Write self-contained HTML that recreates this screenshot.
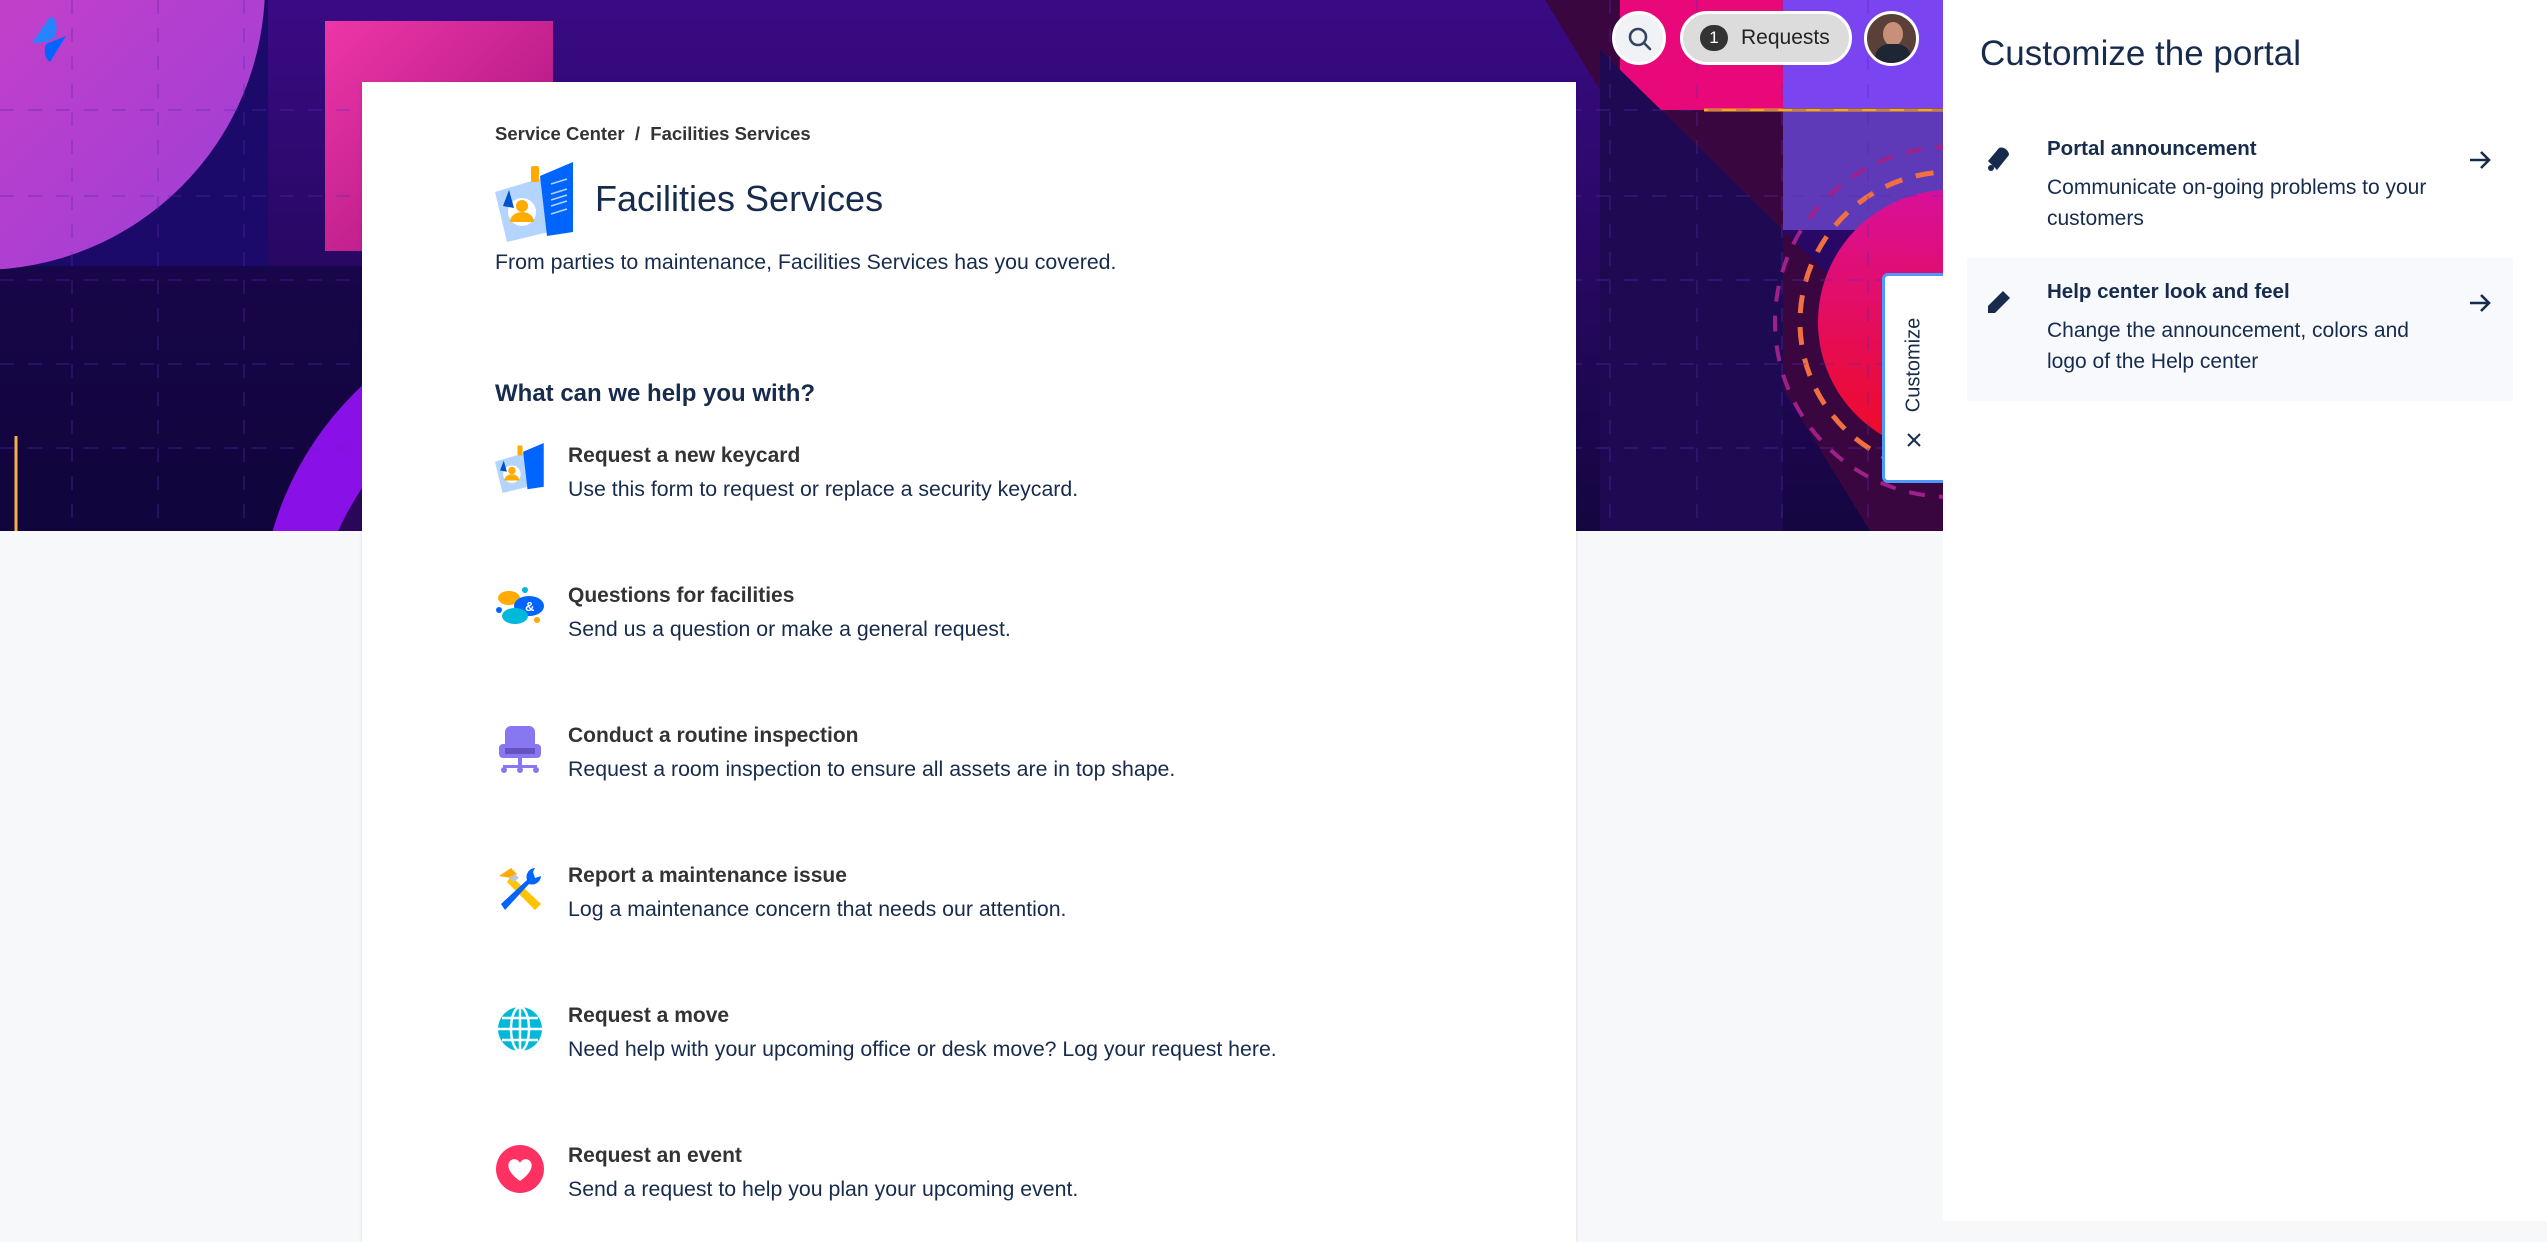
<!DOCTYPE html>
<html><head><meta charset="utf-8"><style>
*{margin:0;padding:0;box-sizing:border-box}
body{width:2547px;height:1221px;overflow:hidden;background:#f7f8fa;font-family:"Liberation Sans",Arial,sans-serif;position:relative;color:#172b4d}
.abs{position:absolute}
.card{position:absolute;left:362px;top:82px;width:1214px;height:1160px;background:#fff;box-shadow:0 1px 3px rgba(9,30,66,.15)}
.bc{position:absolute;left:133px;top:41px;font-size:18.5px;font-weight:bold;color:#333}
.item{position:absolute;left:133px;height:60px}
.item .t{position:absolute;left:73px;top:0;font-size:21px;font-weight:bold;color:#333;white-space:nowrap}
.item .d{position:absolute;left:73px;top:33px;font-size:21.3px;color:#172b4d;white-space:nowrap}
.item svg{position:absolute;left:0;top:0}
.panel{position:absolute;left:1943px;top:0;width:604px;height:1221px;background:#fff}
.pi{position:absolute;left:24px;width:546px;height:143px}
.pi .t{position:absolute;left:80px;top:22px;font-size:20.5px;font-weight:bold}
.pi .d{position:absolute;left:80px;top:57px;font-size:21px;line-height:31px;width:405px}
</style></head><body>
<svg class="abs" style="left:0;top:0" width="1943" height="531" viewBox="0 0 1943 531">
<defs>
<linearGradient id="pk" x1="0" y1="0" x2="1" y2="1"><stop offset="0" stop-color="#f040b8"/><stop offset="1" stop-color="#9a3fd8"/></linearGradient>
<linearGradient id="pr" x1="0" y1="0" x2="1" y2="1"><stop offset="0" stop-color="#ee36a8"/><stop offset="1" stop-color="#a0107a"/></linearGradient>
<linearGradient id="vi" x1="0" y1="0" x2="0" y2="1"><stop offset="0" stop-color="#9b3cf0"/><stop offset="1" stop-color="#7a3cf0"/></linearGradient>
<linearGradient id="rd" x1="0" y1="0" x2="0" y2="1"><stop offset="0" stop-color="#d8109a"/><stop offset="1" stop-color="#f00a20"/></linearGradient>
<linearGradient id="bg" x1="0" y1="0" x2="0" y2="1"><stop offset="0" stop-color="#3a0a84"/><stop offset="1" stop-color="#140640"/></linearGradient>
</defs>
<rect width="1943" height="531" fill="url(#bg)"/>
<rect x="0" y="266" width="362" height="265" fill="#0e0538" opacity=".6"/>
<rect x="0" y="0" width="268" height="266" fill="#1c0a6a"/>
<circle cx="-20" cy="-15" r="285" fill="url(#pk)"/>
<rect x="325" y="21" width="228" height="230" fill="url(#pr)"/>
<circle cx="580" cy="620" r="320" fill="#8a10e8"/>
<circle cx="620" cy="660" r="310" fill="#1a0640" opacity=".85"/>
<circle cx="660" cy="720" r="310" fill="url(#vi)"/>
<polygon points="1545,0 1783,0 1783,230 1943,390 1943,531 1870,531" fill="#3a0640"/>
<rect x="1620" y="0" width="163" height="110" fill="#e8087a"/>
<polygon points="1545,0 1620,0 1620,60" fill="#3a0640"/>
<rect x="1783" y="0" width="160" height="108" fill="#7a44f0"/>
<rect x="1783" y="110" width="160" height="120" fill="#5e3ab8"/>
<polygon points="1600,50 1783,230 1783,531 1600,531" fill="#1e0a52"/>
<line x1="1704" y1="110" x2="1943" y2="110" stroke="#f5a623" stroke-width="3"/>
<circle cx="1950" cy="322" r="175" fill="none" stroke="#a0208a" stroke-width="4" stroke-dasharray="16 14"/>
<circle cx="1950" cy="322" r="150" fill="none" stroke="#f07040" stroke-width="5" stroke-dasharray="18 14"/>
<circle cx="1950" cy="322" r="132" fill="url(#rd)"/>
<g stroke="#5a2ab0" stroke-width="2" stroke-dasharray="14 14" opacity=".3">
<line x1="0" y1="110" x2="1943" y2="110"/><line x1="0" y1="196" x2="1943" y2="196"/><line x1="0" y1="280" x2="1943" y2="280"/><line x1="0" y1="364" x2="1943" y2="364"/><line x1="0" y1="448" x2="1943" y2="448"/>
<line x1="72" y1="0" x2="72" y2="531"/><line x1="158" y1="0" x2="158" y2="531"/><line x1="244" y1="0" x2="244" y2="531"/><line x1="1610" y1="0" x2="1610" y2="531"/><line x1="1697" y1="0" x2="1697" y2="531"/><line x1="1782" y1="0" x2="1782" y2="531"/><line x1="1868" y1="0" x2="1868" y2="531"/>
</g>
<line x1="16" y1="436" x2="16" y2="531" stroke="#f5b04a" stroke-width="3"/>
<path d="M50 17 C58 18 58 30 54 38 L46 42 L32 43 Z" fill="#2684ff"/>
<path d="M66 36 L50 62 C44 58 44 50 46 44 Z" fill="#0065ff"/>
</svg>
<div class="abs" style="left:1612px;top:11px;width:54px;height:54px;border-radius:50%;background:#f1f2f6;border:3px solid #fff"></div>
<svg class="abs" style="left:1626px;top:25px" width="28" height="28" viewBox="0 0 28 28"><circle cx="12" cy="12" r="8" fill="none" stroke="#344563" stroke-width="2.6"/><line x1="18" y1="18" x2="24" y2="24" stroke="#344563" stroke-width="2.6" stroke-linecap="round"/></svg>
<div class="abs" style="left:1680px;top:11px;width:172px;height:54px;border-radius:27px;background:#dcdcdc;border:3px solid #fff"></div>
<div class="abs" style="left:1700px;top:25px;width:28px;height:26px;border-radius:13px;background:#333;color:#fff;font-size:17px;text-align:center;line-height:26px">1</div>
<div class="abs" style="left:1741px;top:26px;font-size:21px;color:#222">Requests</div>
<div class="abs" style="left:1864px;top:11px;width:55px;height:55px;border-radius:50%;background:#5a4038;border:3px solid #fff;overflow:hidden"><div style="position:absolute;left:16px;top:8px;width:20px;height:24px;border-radius:50%;background:#c89078"></div><div style="position:absolute;left:8px;top:30px;width:36px;height:30px;border-radius:14px 14px 0 0;background:#1e2636"></div></div>

<div class="card">
<div class="bc">Service Center &nbsp;/&nbsp; Facilities Services</div>
<svg class="abs" style="left:133px;top:80px" width="80" height="80" viewBox="0 0 80 80"><polygon points="0,30 60,12 62,68 12,80" fill="#b3d4ff"/><polygon points="45,14 78,0 78,70 52,74" fill="#0065ff"/><circle cx="27" cy="50" r="14" fill="#fff"/><circle cx="27" cy="44" r="6" fill="#ffab00"/><path d="M15 60 a12 10 0 0 1 24 0 z" fill="#ffab00"/><polygon points="8,44 14,28 19,46" fill="#0052cc"/><rect x="36" y="4" width="8" height="16" rx="2" fill="#ffab00"/><g stroke="#b3d4ff" stroke-width="1.5"><line x1="56" y1="22" x2="72" y2="17"/><line x1="56" y1="32" x2="72" y2="27"/><line x1="56" y1="38" x2="72" y2="33"/><line x1="56" y1="44" x2="72" y2="39"/><line x1="56" y1="52" x2="72" y2="47"/></g></svg>
<div class="abs" style="left:233px;top:96px;font-size:36px;color:#172b4d">Facilities Services</div>
<div class="abs" style="left:133px;top:168px;font-size:21.3px">From parties to maintenance, Facilities Services has you covered.</div>
<div class="abs" style="left:133px;top:298px;font-size:24px;font-weight:bold">What can we help you with?</div>

<div class="item" style="top:362px"><svg width="50" height="52" viewBox="0 0 80 80" style="top:-2px"><polygon points="0,30 60,12 62,68 12,80" fill="#b3d4ff"/><polygon points="45,14 78,0 78,70 52,74" fill="#0065ff"/><circle cx="27" cy="50" r="14" fill="#fff"/><circle cx="27" cy="44" r="6" fill="#ffab00"/><path d="M15 60 a12 10 0 0 1 24 0 z" fill="#ffab00"/><polygon points="8,44 14,28 19,46" fill="#0052cc"/><rect x="36" y="4" width="8" height="16" rx="2" fill="#ffab00"/></svg><div class="t">Request a new keycard</div><div class="d">Use this form to request or replace a security keycard.</div></div>

<div class="item" style="top:502px"><svg width="52" height="50" viewBox="0 0 52 50"><ellipse cx="14" cy="14" rx="11" ry="7" fill="#ffab00"/><ellipse cx="34" cy="22" rx="15" ry="10" fill="#0065ff"/><ellipse cx="20" cy="32" rx="13" ry="8" fill="#00b8d9"/><circle cx="30" cy="6" r="3" fill="#00b8d9"/><circle cx="4" cy="26" r="3" fill="#0065ff"/><circle cx="42" cy="36" r="3" fill="#ffab00"/><text x="30" y="27" font-size="13" font-weight="bold" fill="#fff" font-family="Liberation Sans">&amp;</text></svg><div class="t">Questions for facilities</div><div class="d">Send us a question or make a general request.</div></div>

<div class="item" style="top:642px"><svg width="50" height="50" viewBox="0 0 50 50"><rect x="10" y="2" width="30" height="26" rx="6" fill="#8777f0"/><rect x="4" y="20" width="42" height="14" rx="4" fill="#8777f0"/><rect x="10" y="24" width="30" height="6" fill="#6554c0"/><rect x="23" y="34" width="4" height="8" fill="#8777f0"/><rect x="8" y="41" width="34" height="3" fill="#8777f0"/><circle cx="9" cy="46" r="3" fill="#8777f0"/><circle cx="25" cy="46" r="3" fill="#8777f0"/><circle cx="41" cy="46" r="3" fill="#8777f0"/></svg><div class="t">Conduct a routine inspection</div><div class="d">Request a room inspection to ensure all assets are in top shape.</div></div>

<div class="item" style="top:782px"><svg width="50" height="50" viewBox="0 0 50 50"><path d="M4 12 L16 4 L22 10 L16 14 Z" fill="#ffab00"/><path d="M16 12 L46 40 L40 46 L12 18 Z" fill="#ffc400"/><path d="M14 14 L20 10 L24 14 L18 18Z" fill="#c1c7d0"/><path d="M40 4 a9 9 0 0 0 -8 12 L6 40 L10 46 L34 20 a9 9 0 0 0 12 -8 L40 14 L38 8 Z" fill="#0065ff"/></svg><div class="t">Report a maintenance issue</div><div class="d">Log a maintenance concern that needs our attention.</div></div>

<div class="item" style="top:922px"><svg width="50" height="50" viewBox="0 0 50 50"><circle cx="25" cy="25" r="22" fill="#00b8d9"/><g fill="none" stroke="#fff" stroke-width="2.5"><ellipse cx="25" cy="25" rx="9" ry="22"/><line x1="25" y1="3" x2="25" y2="47"/><line x1="3" y1="25" x2="47" y2="25"/><path d="M7 14 H43 M7 36 H43"/></g></svg><div class="t">Request a move</div><div class="d">Need help with your upcoming office or desk move? Log your request here.</div></div>

<div class="item" style="top:1062px"><svg width="50" height="50" viewBox="0 0 50 50"><circle cx="25" cy="25" r="24" fill="#ff3162"/><path d="M25 37 C12 28 12 20 15 17 C19 13 24 16 25 19 C26 16 31 13 35 17 C38 20 38 28 25 37Z" fill="#fff"/></svg><div class="t">Request an event</div><div class="d">Send a request to help you plan your upcoming event.</div></div>
</div>

<div class="abs" style="left:1882px;top:273px;width:66px;height:210px;background:#fff;border:3px solid #4c9aff;border-right:none;border-radius:6px 0 0 6px"></div>
<div class="abs" style="left:1914px;top:365px;transform:translate(-50%,-50%) rotate(-90deg);font-size:20px;color:#172b4d;white-space:nowrap">Customize</div>
<svg class="abs" style="left:1906px;top:432px" width="16" height="16" viewBox="0 0 16 16"><path d="M2 2L14 14M14 2L2 14" stroke="#172b4d" stroke-width="2"/></svg>

<div class="panel">
<div class="abs" style="left:37px;top:34px;font-size:35px;color:#172b4d">Customize the portal</div>
<div class="pi" style="top:115px">
<svg class="abs" style="left:18px;top:30px" width="28" height="28" viewBox="0 0 28 28"><path d="M3 16 L14 3 C18 1 24 5 24 10 L12 25 Z" fill="#172b4d"/><circle cx="6" cy="23" r="3" fill="#172b4d"/></svg>
<div class="t">Portal announcement</div><div class="d">Communicate on-going problems to your customers</div>
<svg class="abs" style="left:500px;top:32px" width="26" height="26" viewBox="0 0 26 26"><path d="M3 13H22M14 5L22 13L14 21" fill="none" stroke="#172b4d" stroke-width="2.6"/></svg>
</div>
<div class="pi" style="top:258px;background:#f7f9fc">
<svg class="abs" style="left:18px;top:30px" width="28" height="28" viewBox="0 0 28 28"><path d="M18 3 L25 10 L10 25 L3 25 L3 18 Z" fill="#172b4d"/></svg>
<div class="t">Help center look and feel</div><div class="d">Change the announcement, colors and logo of the Help center</div>
<svg class="abs" style="left:500px;top:32px" width="26" height="26" viewBox="0 0 26 26"><path d="M3 13H22M14 5L22 13L14 21" fill="none" stroke="#172b4d" stroke-width="2.6"/></svg>
</div>
</div>
</body></html>
